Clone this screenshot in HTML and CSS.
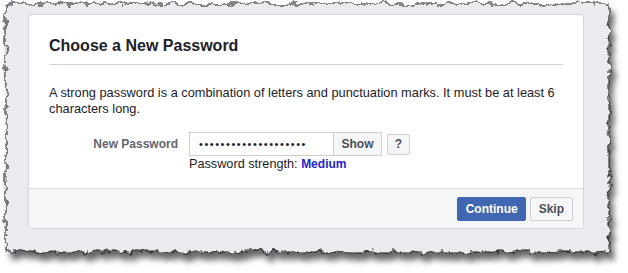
FILE: index.html
```html
<!DOCTYPE html>
<html>
<head>
<meta charset="utf-8">
<link rel="stylesheet" href="styles.css">
</head>
<body>
<div class="frame">
  <svg class="paper" width="628" height="273" viewBox="0 0 628 273" aria-hidden="true">
    <defs>
      <filter id="torn" x="-5%" y="-5%" width="115%" height="125%">
        <feTurbulence type="fractalNoise" baseFrequency="0.11" numOctaves="4" seed="7" result="n"/>
        <feDisplacementMap in="SourceGraphic" in2="n" scale="10" xChannelSelector="R" yChannelSelector="G" result="d"/>
        <feDropShadow dx="4" dy="7" stdDeviation="3.2" flood-color="#000" flood-opacity="0.6"/>
      </filter>
    </defs>
    <rect x="6" y="4" width="603" height="248" fill="#e9ebee" stroke="#1a1a1a" stroke-width="1" filter="url(#torn)"/>
  </svg>
  <div class="card">
    <div class="head">
      <h2 class="title">Choose a New Password</h2>
    </div>
    <div class="body">
      <p class="intro">A strong password is a combination of letters and punctuation marks. It must be at least 6 characters long.</p>
      <div class="row">
        <label class="label">New Password</label>
        <div class="field">
          <div class="inputs">
            <div class="input">&bull;&bull;&bull;&bull;&bull;&bull;&bull;&bull;&bull;&bull;&bull;&bull;&bull;&bull;&bull;&bull;&bull;&bull;&bull;&bull;</div>
            <button class="show">Show</button>
            <button class="help">?</button>
          </div>
          <div class="strength">Password strength: <b class="medium">Medium</b></div>
        </div>
      </div>
    </div>
    <div class="foot">
      <button class="btn primary">Continue</button>
      <button class="btn">Skip</button>
    </div>
  </div>
</div>
</body>
</html>
```
FILE: styles.css
```css
html, body {
  margin: 0;
  padding: 0;
  background: #ffffff;
}
body {
  font-family: "Liberation Sans", Helvetica, Arial, sans-serif;
  color: #1d2129;
  width: 628px;
  height: 273px;
  overflow: hidden;
}
.frame {
  position: relative;
  width: 628px;
  height: 273px;
  box-sizing: border-box;
  padding: 14px 0 0 28px;
}
.paper {
  position: absolute;
  left: 0;
  top: 0;
  z-index: 0;
}
.card {
  position: relative;
  z-index: 1;
  width: 556px;
  box-sizing: border-box;
  background: #fff;
  border: 1px solid #d3d6db;
  border-radius: 3px;
  overflow: hidden;
}
.head {
  margin: 0 20px;
  padding: 21px 0 8px;
  border-bottom: 1px solid #cfd2d7;
}
.title {
  margin: 0;
  font-size: 16px;
  line-height: 20px;
  font-weight: bold;
  color: #1d2129;
}
.body {
  padding: 20px 20px 16px;
}
.intro {
  margin: 0;
  font-size: 12.8px;
  line-height: 16px;
  color: #1d2129;
}
.row {
  display: flex;
  margin-top: 15px;
}
.label {
  width: 129px;
  padding-right: 11px;
  text-align: right;
  font-size: 12px;
  font-weight: bold;
  color: #606770;
  line-height: 24px;
}
.inputs {
  display: flex;
  align-items: center;
}
.input {
  width: 144px;
  height: 24px;
  box-sizing: border-box;
  border: 1px solid #ccd0d5;
  border-right: none;
  padding-left: 9px;
  font-size: 11px;
  line-height: 22px;
  letter-spacing: 1.55px;
  color: #1d2129;
  overflow: hidden;
  white-space: nowrap;
}
.show {
  height: 24px;
  width: 49px;
  box-sizing: border-box;
  border: 1px solid #ccd0d5;
  background: #f5f6f7;
  font-family: inherit;
  font-size: 12px;
  font-weight: bold;
  color: #4b4f56;
  padding: 0;
}
.help {
  margin-left: 5px;
  height: 21px;
  width: 23px;
  box-sizing: border-box;
  border: 1px solid #ccd0d5;
  border-radius: 2px;
  background: #f5f6f7;
  font-family: inherit;
  font-size: 12px;
  font-weight: bold;
  color: #4b4f56;
  padding: 0;
}
.strength {
  font-size: 12.7px;
  line-height: 16px;
  color: #1d2129;
}
.medium {
  color: #2424d4;
  font-size: 12px;
}
.foot {
  display: flex;
  justify-content: flex-end;
  gap: 4px;
  padding: 8px 10px 7px;
  background: #f5f6f7;
  border-top: 1px solid #dadde1;
}
.btn {
  height: 24px;
  box-sizing: border-box;
  padding: 0 8px;
  border: 1px solid #ccd0d5;
  border-radius: 2px;
  background: #f6f7f9;
  font-family: inherit;
  font-size: 12px;
  font-weight: bold;
  color: #4b4f56;
}
.btn.primary {
  background: #4267b2;
  border-color: #4267b2;
  color: #fff;
  width: 69px;
}
```
